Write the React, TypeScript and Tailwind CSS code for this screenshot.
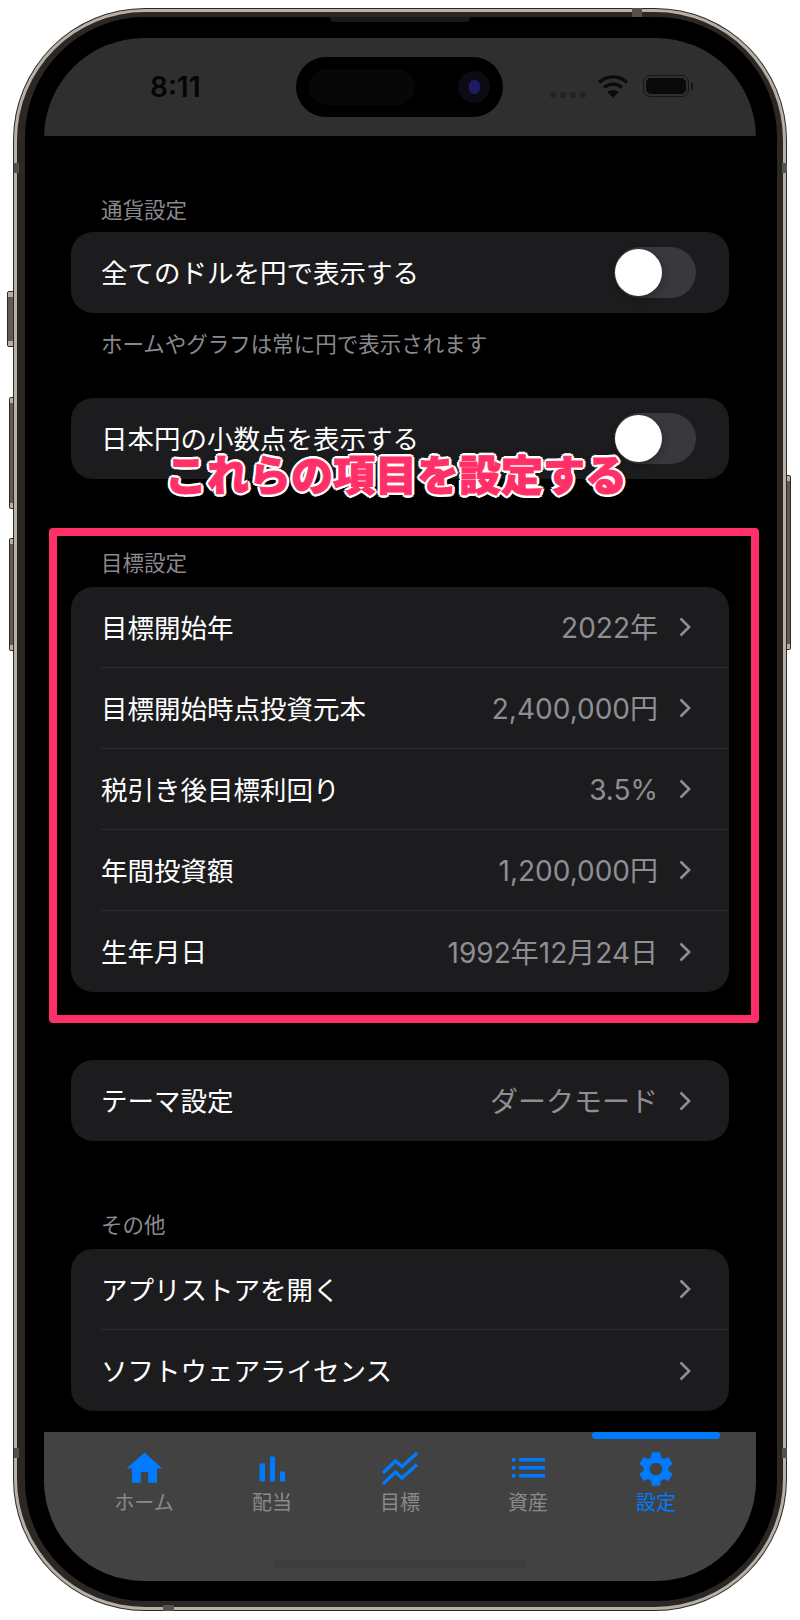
import { MdHome, MdSettings } from 'react-icons/md'

function Chevron() {
  return (
    <svg width="12" height="20" viewBox="0 0 12 20" fill="none" className="shrink-0 ml-[21px] mr-[38px]">
      <path d="M1.5 1.5 10.2 10 1.5 18.5" stroke="#8e8e93" strokeWidth="2.6" />
    </svg>
  )
}

function Toggle() {
  return (
    <div className="w-[82px] h-[51px] rounded-full bg-[#39393d] mr-[33px] pl-[1px] py-[2px] shrink-0">
      <div className="w-[47px] h-[47px] rounded-full bg-white shadow-[0_3px_8px_rgba(0,0,0,0.3)]" />
    </div>
  )
}

function Row({ label, value, last }: { label: string; value?: string; last?: boolean }) {
  return (
    <div className="h-[81px] flex flex-col">
      <div className="flex-1 flex items-center pl-[30px]">
        <span className="flex-1 text-[26.5px] leading-none text-white pt-[2px]">{label}</span>
        {value && <span className="text-[28px] leading-none text-[#8e8e93] pt-[2px]">{value}</span>}
        <Chevron />
      </div>
      {!last && <div className="h-px ml-[30px] bg-[#2c2c2e]" />}
    </div>
  )
}

function SwitchRow({ label }: { label: string }) {
  return (
    <div className="h-[81px] rounded-[22px] bg-[#1c1c1e] flex items-center pl-[30px]">
      <span className="flex-1 text-[26.5px] leading-none text-white pt-[2px]">{label}</span>
      <Toggle />
    </div>
  )
}

function SectionLabel({ children }: { children: string }) {
  return <div className="h-[24px] pl-[30px] text-[21.5px] leading-[24px] text-[#8a8a8e]">{children}</div>
}

function BarsIcon() {
  return (
    <svg width="26" height="26" viewBox="0 0 26 26" fill="#007aff">
      <rect x="0.5" y="7.5" width="5.5" height="18" />
      <rect x="11" y="0.5" width="5" height="25" />
      <rect x="21" y="15.5" width="5" height="10" />
    </svg>
  )
}

function TrendIcon() {
  return (
    <svg width="36" height="34" viewBox="0 0 36 34" fill="none">
      <path d="M1 21 13.5 9 20 14.5 35 1" stroke="#007aff" strokeWidth="3.4" />
      <path d="M1 32 13.5 20 20 26 35 12.5" stroke="#007aff" strokeWidth="3.4" />
    </svg>
  )
}

function ListIcon() {
  return (
    <svg width="33" height="24" viewBox="0 0 33 24" fill="#007aff">
      <rect x="0" y="1" width="3.5" height="3.5" />
      <rect x="0" y="9" width="3.5" height="3.5" />
      <rect x="0" y="17" width="3.5" height="3.5" />
      <rect x="7" y="1" width="26" height="3.5" />
      <rect x="7" y="9" width="26" height="3.5" />
      <rect x="7" y="17" width="26" height="3.5" />
    </svg>
  )
}

const tabs = [
  { label: 'ホーム', icon: <MdHome size={43} color="#007aff" /> },
  { label: '配当', icon: <BarsIcon /> },
  { label: '目標', icon: <TrendIcon /> },
  { label: '資産', icon: <ListIcon /> },
  { label: '設定', icon: <MdSettings size={42} color="#007aff" />, active: true },
]

function TabBar() {
  return (
    <div className="h-[149px] bg-[#424242] px-[36px] flex shrink-0">
      {tabs.map((tab) => (
        <div key={tab.label} className="w-[128px] flex flex-col items-center relative">
          {tab.active && <div className="absolute top-0 inset-x-0 h-[7px] rounded-full bg-[#007aff]" />}
          <div className="mt-[15px] h-[43px] flex items-center justify-center">{tab.icon}</div>
          <div className={`mt-[1px] text-[20px] leading-[24px] ${tab.active ? 'text-[#007aff]' : 'text-[#8a8a8a]'}`}>
            {tab.label}
          </div>
        </div>
      ))}
    </div>
  )
}

function StatusBar() {
  return (
    <div className="h-[98px] bg-[#2f2f2f] relative shrink-0">
      <div className="absolute left-[106px] top-[34px] text-[28px] leading-[30px] font-semibold text-[#050505]">8:11</div>
      {/* dynamic island */}
      <div className="absolute left-[252px] top-[19px] w-[207px] h-[60px] rounded-full bg-black flex items-center">
        <div className="ml-[13px] w-[106px] h-[36px] rounded-full bg-[#070707]" />
        <div className="ml-[43px] w-[32px] h-[32px] rounded-full bg-[#0c0a12] flex items-center justify-center">
          <div className="w-[11px] h-[14px] rounded-full bg-[#1c1c66]" />
        </div>
      </div>
      <div className="absolute left-[506px] top-[54px] flex gap-[4px]">
        <div className="w-[6px] h-[6px] rounded-full bg-[#222]" />
        <div className="w-[6px] h-[6px] rounded-full bg-[#222]" />
        <div className="w-[6px] h-[6px] rounded-full bg-[#222]" />
        <div className="w-[6px] h-[6px] rounded-full bg-[#222]" />
      </div>
      <svg className="absolute left-[553px] top-[36px]" width="32" height="24" viewBox="0 0 32 24" fill="none">
        <path d="M2 8.5C10 1 22 1 30 8.5" stroke="#0a0a0a" strokeWidth="3.4" />
        <path d="M7 13.5C12 9 20 9 25 13.5" stroke="#0a0a0a" strokeWidth="3.4" />
        <path d="M16 24 10.5 18C13.5 15.5 18.5 15.5 21.5 18Z" fill="#0a0a0a" />
      </svg>
      <div className="absolute left-[599px] top-[37px] w-[46px] h-[22px] rounded-[7px] border border-[#161616] p-[2px]">
        <div className="w-full h-full rounded-[5px] bg-[#0a0a0a]" />
      </div>
      <div className="absolute left-[647px] top-[44px] w-[2px] h-[8px] rounded-r-full bg-[#161616]" />
    </div>
  )
}

function SideButton({ className }: { className: string }) {
  return (
    <div className={`absolute border border-[#2a2a2a] rounded-l-[2px] bg-[#5f5b55] flex flex-col justify-between ${className}`}>
      <div className="h-[5px] bg-[#b8b0a6]" />
      <div className="h-[5px] bg-[#b8b0a6]" />
    </div>
  )
}

export default function App() {
  return (
    <div className="w-[800px] h-[1620px] bg-white relative overflow-hidden pl-[13px] pt-[8px] font-['Inter','Noto_Sans_CJK_JP',sans-serif]">
      <SideButton className="left-[7px] top-[291px] w-[7px] h-[56px]" />
      <SideButton className="left-[9px] top-[397px] w-[5px] h-[112px]" />
      <SideButton className="left-[9px] top-[538px] w-[5px] h-[113px]" />
      <SideButton className="left-[786px] top-[475px] w-[5px] h-[175px] rotate-180" />

      {/* phone body */}
      <div className="relative w-[774px] h-[1603px] rounded-[132px] bg-[#2b2a28] p-px">
        <div className="h-full rounded-[131px] bg-[#b8b0a6] p-[3px]">
          <div className="h-full rounded-[128px] bg-[#2a2724] pl-[8px] pr-[6px] pt-[5px] pb-[6px]">
            <div className="h-full rounded-[120px] bg-black pl-[19px] pr-[21px] pt-[21px] pb-[20px]">
              <div className="h-full rounded-[100px] overflow-hidden bg-black flex flex-col">
                <StatusBar />

                <div className="flex-1 overflow-hidden px-[27px] pt-[62px]">
                  <SectionLabel>通貨設定</SectionLabel>
                  <div className="mt-[10px]">
                    <SwitchRow label="全てのドルを円で表示する" />
                  </div>
                  <div className="mt-[19px] pl-[30px] text-[21.5px] leading-[24px] text-[#8a8a8e]">ホームやグラフは常に円で表示されます</div>
                  <div className="mt-[42px]">
                    <SwitchRow label="日本円の小数点を表示する" />
                  </div>

                  <div className="mt-[72px]">
                    <SectionLabel>目標設定</SectionLabel>
                  </div>
                  <div className="mt-[12px] rounded-[22px] bg-[#1c1c1e] overflow-hidden">
                    <Row label="目標開始年" value="2022年" />
                    <Row label="目標開始時点投資元本" value="2,400,000円" />
                    <Row label="税引き後目標利回り" value="3.5%" />
                    <Row label="年間投資額" value="1,200,000円" />
                    <Row label="生年月日" value="1992年12月24日" last />
                  </div>

                  <div className="mt-[68px] rounded-[22px] bg-[#1c1c1e] overflow-hidden">
                    <Row label="テーマ設定" value="ダークモード" last />
                  </div>

                  <div className="mt-[72px]">
                    <SectionLabel>その他</SectionLabel>
                  </div>
                  <div className="mt-[12px] rounded-[22px] bg-[#1c1c1e] overflow-hidden">
                    <Row label="アプリストアを開く" />
                    <Row label="ソフトウェアライセンス" last />
                  </div>
                </div>

                <TabBar />
              </div>
            </div>
          </div>
        </div>
      </div>

      {/* speaker slit, antenna bands, home indicator */}
      <div className="absolute left-[330px] top-[17px] w-[140px] h-[5px] rounded-b-[4px] bg-[#1a1a1a]" />
      <div className="absolute left-[632px] top-[8px] w-[10px] h-[9px] bg-[#55524d]" />
      <div className="absolute left-[163px] top-[1605px] w-[11px] h-[6px] bg-[#55524d]" />
      <div className="absolute left-[14px] top-[163px] w-[5px] h-[10px] bg-[#55524d]" />
      <div className="absolute left-[14px] top-[1448px] w-[5px] h-[10px] bg-[#55524d]" />
      <div className="absolute left-[782px] top-[163px] w-[5px] h-[10px] bg-[#55524d]" />
      <div className="absolute left-[782px] top-[1448px] w-[5px] h-[10px] bg-[#55524d]" />
      <div className="absolute left-[273px] top-[1560px] w-[254px] h-[8px] rounded-full bg-[#3d3d3d]" />

      {/* annotation */}
      <div className="absolute left-[49px] top-[528px] w-[710px] h-[495px] border-[8px] border-[#ff3068] rounded-[4px]" />
      <div className="absolute left-[166px] top-[450px] w-[460px] flex justify-center text-[42px] leading-[52px] font-black whitespace-nowrap text-[#ff3068] [-webkit-text-stroke:1px_#ff3068] [text-shadow:3px_0_0_#fff,-3px_0_0_#fff,0_3px_0_#fff,0_-3px_0_#fff,2px_2px_0_#fff,-2px_2px_0_#fff,2px_-2px_0_#fff,-2px_-2px_0_#fff,0_0_6px_rgba(0,0,0,0.8)]">
        これらの項目を設定する
      </div>
    </div>
  )
}
